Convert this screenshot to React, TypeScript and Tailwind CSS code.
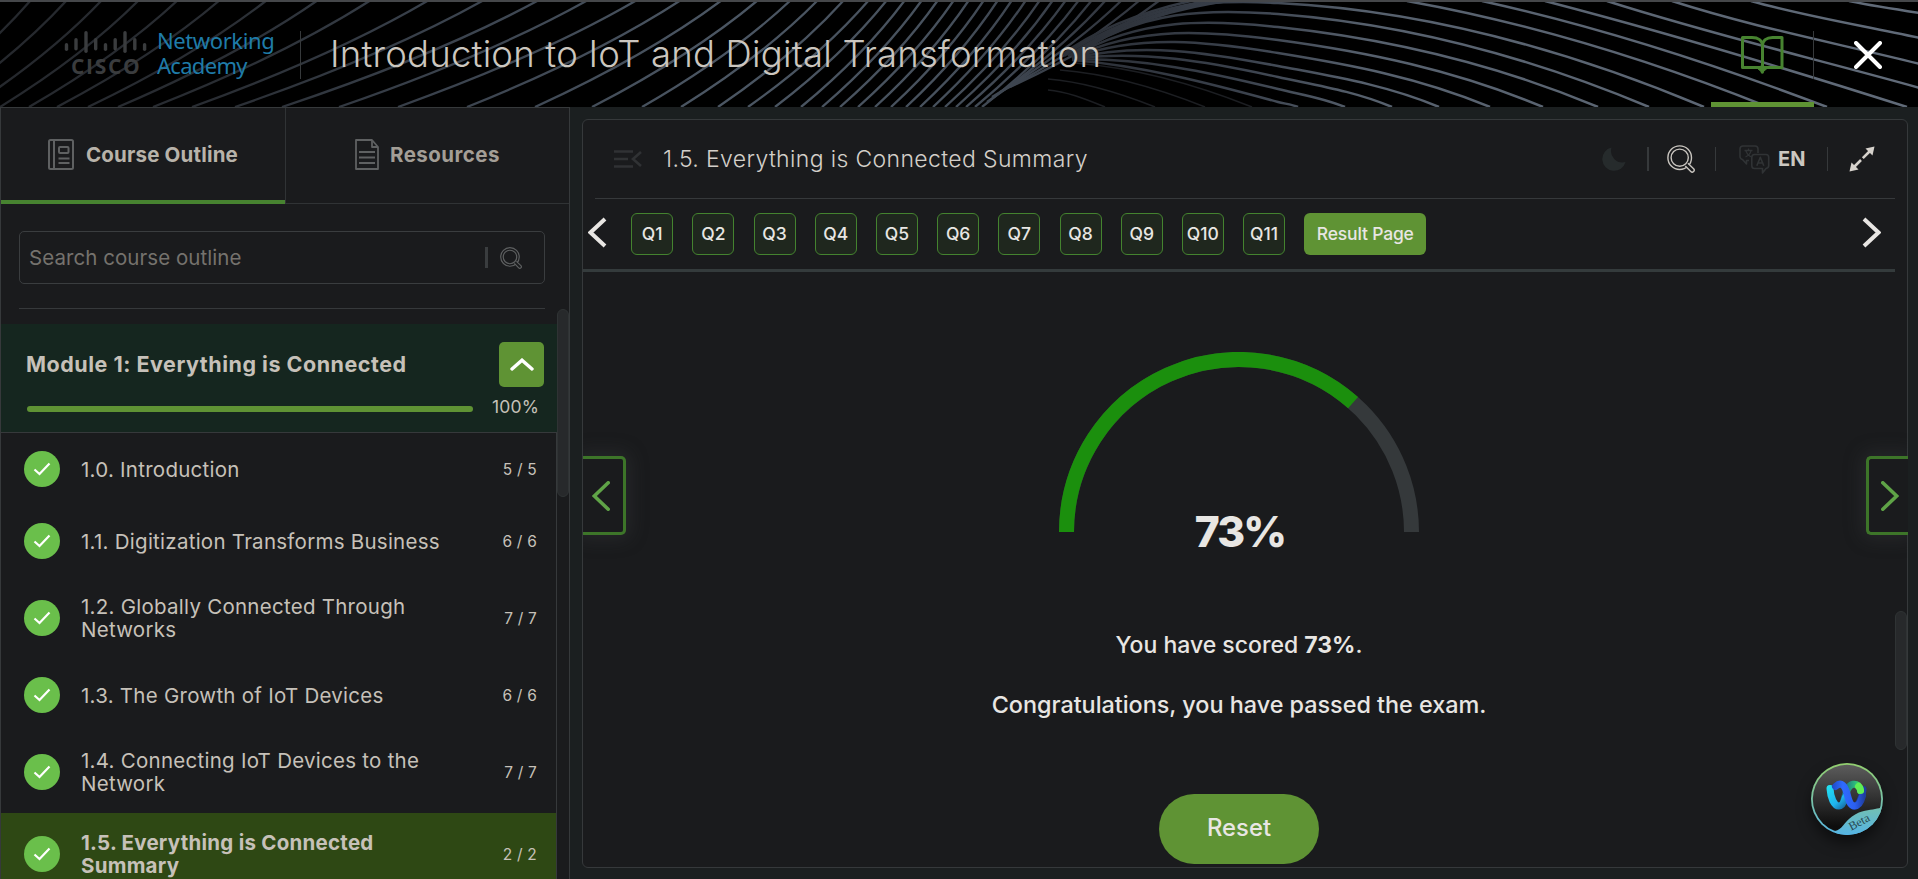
import React from "react";

type Pt = [number, number];

/* ---------- header background ---------- */
const topXs = [
  -110, -75, -40, -4, 31, 67, 102, 139, 178, 220, 267, 318, 371, 429, 484, 539, 588, 637, 681, 722, 758, 791, 818, 844,
  869, 887, 905, 922, 938, 954, 969, 984, 998, 1012, 1026, 1040, 1053, 1066, 1079, 1092, 1106, 1122, 1140, 1160,
];
const bottomXs = [
  -90, -60, -30, 0, 29, 57, 88, 118, 153, 192, 235, 282, 339, 398, 467, 535, 592, 642, 681, 718, 748, 775, 801, 822,
  840, 858, 875, 891, 906, 920, 933, 945, 956, 966, 975, 982, 987, 992, 1000, 1010,
];

function hermite(a: Pt, sa: number, b: Pt, sb: number) {
  const d = (b[0] - a[0]) / 3;
  return `C${a[0] + d} ${a[1] + sa * d} ${b[0] - d} ${b[1] - sb * d} ${b[0]} ${b[1]}`;
}

const leftLines = bottomXs.map((xb, i) => {
  const xt = topXs[i + 4] ?? 1180;
  const dx = xt - xb;
  const yb = i > 35 ? 107 - (i - 35) * 5 : 107;
  return `M${xb} ${yb} Q${xb + dx * 0.6} ${yb * 0.52} ${xt} 0`;
});

const rightEnds: [number, number][] = [
  [3, 1704], [14, 1649], [27, 1598], [40, 1543], [53, 1490], [66, 1439], [77, 1392], [89, 1345], [102, 1298],
];
const rightLines = rightEnds.map(([y, xe], i) => {
  const slope = 0.05 + i * 0.028;
  return `M1072 ${56 + i * 0.5} ${hermite([1072, 56 + i * 0.5], -0.8 + i * 0.11, [1278, y], slope)} ${hermite([1278, y], slope, [xe, 107], 0.42)}`;
});
const outerLines = [
  `M1407 1 ${hermite([1407, 1], 0.18, [1768, 107], 0.4)}`,
  `M1482 1 ${hermite([1482, 1], 0.22, [1827, 107], 0.38)}`,
  `M1545 1 ${hermite([1545, 1], 0.26, [1907, 107], 0.32)}`,
  `M1607 1 ${hermite([1607, 1], 0.32, [1920, 88], 0.28)}`,
  `M1672 1 ${hermite([1672, 1], 0.32, [1920, 64], 0.25)}`,
  `M1751 1 ${hermite([1751, 1], 0.28, [1920, 38], 0.22)}`,
  `M1849 1 ${hermite([1849, 1], 0.2, [1920, 13], 0.15)}`,
];
const fanLines = [0, 1, 2, 3].map(
  (i) => `M${1060 + i * 4} 56 C${1090 + i * 8} ${34 - i * 2} ${1130 + i * 14} ${14 - i * 3} ${1195 + i * 22} ${0 - i}`,
);
const dimLines = (
  [
    [1048, 90, 1105, 107],
    [1048, 79, 1155, 107],
    [1060, 70, 1205, 107],
    [1075, 63, 1252, 107],
  ] as number[][]
).map(([x1, y1, x2, y2]) => `M${x1} ${y1} ${hermite([x1, y1], 0.08, [x2, y2], 0.4)}`);

function HeaderLines() {
  return (
    <svg className="absolute inset-0" width="1918" height="107" viewBox="0 0 1918 107" fill="none" aria-hidden>
      <defs>
        <linearGradient id="fadeLeft" gradientUnits="userSpaceOnUse" x1="0" y1="0" x2="1100" y2="0">
          <stop offset="0" stopColor="#25282d" />
          <stop offset="0.2" stopColor="#292d33" />
          <stop offset="0.4" stopColor="#3a424d" />
          <stop offset="0.65" stopColor="#4b5663" />
          <stop offset="0.85" stopColor="#47515d" />
          <stop offset="1" stopColor="#333841" />
        </linearGradient>
        <linearGradient id="fadeRight" gradientUnits="userSpaceOnUse" x1="1070" y1="0" x2="1918" y2="0">
          <stop offset="0" stopColor="#2a2e35" />
          <stop offset="0.2" stopColor="#3a414c" />
          <stop offset="0.35" stopColor="#56606d" />
          <stop offset="1" stopColor="#616b79" />
        </linearGradient>
      </defs>
      <g stroke="url(#fadeLeft)" strokeWidth="2.3">
        {leftLines.map((d, i) => (
          <path key={i} d={d} />
        ))}
      </g>
      <g stroke="url(#fadeRight)" strokeWidth="2.5">
        {[...rightLines, ...outerLines, ...fanLines].map((d, i) => (
          <path key={i} d={d} />
        ))}
      </g>
      <g stroke="#1c1e22" strokeWidth="1.6">
        {dimLines.map((d, i) => (
          <path key={i} d={d} />
        ))}
      </g>
    </svg>
  );
}

function CiscoLogo() {
  const bars: [number, number, number][] = [
    [66.5, 12, 8], [76, 7, 12.5], [86, 0, 22], [95.7, 7, 12.5], [105.5, 12, 8], [115.2, 7, 12.5], [125, 0, 22],
    [134.8, 7, 12.5], [144.6, 12, 8],
  ];
  return (
    <div className="flex w-[84px] flex-col pt-[31px]">
      <svg width="84" height="22" viewBox="64 0 84 22" className="block" aria-hidden>
        {bars.map(([x, y, h]) => (
          <rect key={x} x={x - 1.7} y={y} width="3.4" height={h} rx="1.7" fill="#3a3c3e" />
        ))}
      </svg>
      <span className="mt-[3px] pl-[7px] font-['Open_Sans',sans-serif] text-[21px] leading-[21px] font-bold tracking-[1.7px] text-[#3a3c3e]">
        CISCO
      </span>
    </div>
  );
}

/* ---------- icons ---------- */
function BookIcon() {
  return (
    <svg width="44" height="40" viewBox="0 0 44 40" fill="none" stroke="#478330" strokeWidth="3" strokeLinejoin="round" className="mr-[2px]" aria-hidden>
      <path d="M2.500 2.500H12c6 0 10.500 3 10.500 8.500V32.500H2.500Z" />
      <path d="M42 2.500H32.500c-6 0-10 3-10 8.500V32.500H42Z" />
      <path d="M22.300 31v6" strokeWidth="3.400" strokeLinecap="round" />
      <path d="M17.500 33.500h9.500l-4.700 4z" fill="#478330" strokeWidth="1" />
    </svg>
  );
}

function MagnifierIcon({ size, color, line }: { size: number; color: string; line: number }) {
  return (
    <svg width={size} height={size} viewBox="0 0 28 28" fill="none" stroke={color} strokeWidth={line} aria-hidden>
      <circle cx="12.700" cy="12.700" r="11.800" />
      <path fill="#1a1b1d" strokeLinejoin="round" d="M18.300 20.900 23.800 26.500a1.900 1.900 0 0 0 2.800-2.700L20.900 18.300" />
      <circle cx="12.700" cy="12.700" r="8.600" />
    </svg>
  );
}

function OutlineIcon() {
  return (
    <svg width="26" height="31" viewBox="0 0 26 31" fill="none" stroke="#5f6162" strokeWidth="2" aria-hidden>
      <rect x="1" y="1" width="24" height="29" rx="1.500" />
      <path d="M6 1v29M10.500 19.500h11M10.500 24h11" />
      <rect x="11" y="8" width="9.500" height="6" rx="1" />
    </svg>
  );
}

function DocumentIcon() {
  return (
    <svg width="24" height="31" viewBox="0 0 24 31" fill="none" stroke="#5f6162" strokeWidth="1.800" strokeLinejoin="round" aria-hidden>
      <path d="M1 1h16l6 7v22H1Z" />
      <path d="M17 1v7h6M4 13h16M4 18.500h16M4 24h16" />
    </svg>
  );
}

function TranslateIcon() {
  return (
    <svg width="31" height="29" viewBox="0 0 31 29" fill="none" stroke="#303335" strokeWidth="1.600" strokeLinejoin="round" aria-hidden>
      <path d="M10 15.500H7.500v3.500l-4-4.500C1.800 14 1 13.200 1 11.500V4c0-1.800 1-3 3-3h12c2 0 3 1.200 3 3v4" />
      <path d="M5.500 5.500h8M9.500 3.500v2M6.500 12c3-1.500 5-3.500 5.500-6.500M7 6c1 3 3 5 5.500 6" strokeWidth="1.300" />
      <path d="M15.500 9.500H27c1.800 0 2.700 1 2.700 2.700v8.300c0 1.800-1 2.700-2.700 3l-3.500 4.500v-4.500h-8c-1.800 0-2.700-1-2.700-2.700v-8.600c0-1.700 1-2.700 2.700-2.700Z" />
      <path d="M17.800 20.800l3.500-8.500 3.500 8.500M19 18h4.600" />
    </svg>
  );
}

function ExpandIcon() {
  return (
    <svg width="26" height="26" viewBox="0 0 26 26" fill="#d6d2cc" aria-hidden>
      <path d="M25.500.500 23.500 9.500l-7-7Z" />
      <path d="M.500 25.500 2.500 16.500l7 7Z" />
      <path d="M20.500 5.500 13.800 12.200M12 14 5.500 20.500" stroke="#d6d2cc" strokeWidth="2.600" />
    </svg>
  );
}

function Chevron({ dir, w, h, color, line, cap = "round" }: { dir: "left" | "right"; w: number; h: number; color: string; line: number; cap?: "round" | "butt" }) {
  const p = line / 2;
  const d = dir === "left" ? `M${w - p} ${p}L${p + 0.5} ${h / 2}L${w - p} ${h - p}` : `M${p} ${p}L${w - p - 0.5} ${h / 2}L${p} ${h - p}`;
  return (
    <svg width={w} height={h} viewBox={`0 0 ${w} ${h}`} fill="none" stroke={color} strokeWidth={line} strokeLinecap={cap} aria-hidden>
      <path d={d} />
    </svg>
  );
}

function AssistantBadge() {
  return (
    <svg width="72" height="72" viewBox="0 0 72 72" fill="none" aria-hidden>
      <defs>
        <linearGradient id="ring" x1="0" y1="0" x2="0" y2="72" gradientUnits="userSpaceOnUse">
          <stop offset="0" stopColor="#93cf6e" />
          <stop offset="0.6" stopColor="#74c0b0" />
          <stop offset="1" stopColor="#55b4e4" />
        </linearGradient>
        <linearGradient id="disc" x1="0" y1="0" x2="0" y2="1">
          <stop offset="0" stopColor="#5c5c5c" />
          <stop offset="0.9" stopColor="#0d0d0d" />
        </linearGradient>
        <linearGradient id="cyanArm" x1="16" y1="24" x2="36" y2="46" gradientUnits="userSpaceOnUse">
          <stop offset="0" stopColor="#22e0f0" />
          <stop offset="0.6" stopColor="#1fb4ee" />
          <stop offset="1" stopColor="#14568f" />
        </linearGradient>
        <linearGradient id="greenArm" x1="34" y1="0" x2="52" y2="0" gradientUnits="userSpaceOnUse">
          <stop offset="0" stopColor="#1c6f86" />
          <stop offset="0.6" stopColor="#2fbf7a" />
          <stop offset="1" stopColor="#66f04f" />
        </linearGradient>
        <linearGradient id="blueArm" x1="20" y1="0" x2="54" y2="0" gradientUnits="userSpaceOnUse">
          <stop offset="0" stopColor="#1d46c0" />
          <stop offset="0.35" stopColor="#2f6bff" />
          <stop offset="0.7" stopColor="#2b5ff0" />
          <stop offset="1" stopColor="#1e3c9c" />
        </linearGradient>
        <clipPath id="discClip">
          <circle cx="36" cy="36" r="36" />
        </clipPath>
      </defs>
      <circle cx="36" cy="36" r="36" fill="url(#ring)" />
      <circle cx="36" cy="36" r="34.200" fill="url(#disc)" />
      <g clipPath="url(#discClip)">
        <path d="M24 68c7-1 9-9 17-14.500 10-7 17-6 23-7.500 3-.500 5-1 8-2v30H24Z" fill="url(#ring)" />
      </g>
      <g strokeWidth="7" strokeLinecap="round">
        <path d="M52 26.500C51 37 47 43 43 43" stroke="#1f3f9f" />
        <path d="M33 37c2-8 4-15 9-15.800 4-.500 7 2 7.500 6.300" stroke="url(#greenArm)" />
        <path d="M19 25.500c.500 9 4 17.500 9 17.500 3 0 5-4 6.500-9" stroke="url(#cyanArm)" />
        <path d="M24.500 23.500c6-5.500 9.500-.500 11.500 7 1.500 6 3 12.500 7.500 12.500 4 0 6.500-4 8-10" stroke="url(#blueArm)" />
        <path d="M47.500 23.500q2 2 2 4" stroke="#5fee55" />
      </g>
    </svg>
  );
}

/* ---------- sidebar ---------- */
const lessons = [
  { title: ["1.0. Introduction"], done: "5 / 5" },
  { title: ["1.1. Digitization Transforms Business"], done: "6 / 6" },
  { title: ["1.2. Globally Connected Through", "Networks"], done: "7 / 7" },
  { title: ["1.3. The Growth of IoT Devices"], done: "6 / 6" },
  { title: ["1.4. Connecting IoT Devices to the", "Network"], done: "7 / 7" },
  { title: ["1.5. Everything is Connected", "Summary"], done: "2 / 2", active: true },
];

function Sidebar() {
  return (
    <aside className="relative flex h-[772px] w-[570px] shrink-0 flex-col border-x border-t border-[#36393b] bg-[#1a1b1d]">
      <div className="flex h-[96px] shrink-0">
        <button className="flex w-[284px] items-center border-b-4 border-[#478330] pl-[47px]">
          <OutlineIcon />
          <span className="ml-[12px] pt-[2px] text-[20.500px] font-bold tracking-[0.170px] text-[#b8b3aa]">Course Outline</span>
        </button>
        <button className="flex flex-1 items-center border-b border-l border-[#303335] pb-[3px] pl-[69px]">
          <DocumentIcon />
          <span className="ml-[11px] pt-[2px] text-[20.500px] font-bold tracking-[0.450px] text-[#a39e96]">Resources</span>
        </button>
      </div>

      <div className="mx-[18px] mt-[27px] flex h-[53px] w-[526px] shrink-0 items-center rounded-[5px] border border-[#3a3d3f] pl-[9px]">
        <span className="w-[456px] pt-[2px] text-[20.500px] tracking-[0.060px] text-[#75726d]">Search course outline</span>
        <span className="h-[21px] w-[3px] bg-[#3a3d3f]" />
        <span className="ml-[12px]">
          <MagnifierIcon size={22} color="#5e6061" line={1.5} />
        </span>
      </div>
      <div className="mx-[18px] mt-[24px] h-px w-[526px] shrink-0 bg-[#36393b]" />

      <div className="mt-[15px] flex h-[109px] w-[556px] shrink-0 flex-col border-b border-[#36393b] bg-[#15261f] pt-[18px] pl-[25px]">
        <div className="flex h-[45px] items-center justify-between pr-[13px]">
          <span className="text-[21.500px] font-bold tracking-[0.510px] text-[#c6c1b9]">Module 1: Everything is Connected</span>
          <button className="flex h-[45px] w-[45px] items-center justify-center rounded-[5px] bg-[#5f9334]">
            <svg width="24" height="13" viewBox="0 0 24 13" fill="none" stroke="#fff" strokeWidth="3.400" strokeLinecap="round" aria-hidden>
              <path d="M2 11 12 2.200 22 11" />
            </svg>
          </button>
        </div>
        <div className="mt-[7px] flex h-[26px] items-center">
          <div className="mt-[4px] ml-px h-[6px] w-[446px] rounded-[3px] bg-[#5f9334]" />
          <span className="ml-[19px] pt-px text-[17.500px] tracking-[0.200px] text-[#c6c1b9]">100%</span>
        </div>
      </div>

      <ul className="flex w-[556px] flex-1 flex-col overflow-hidden border-r border-[#36393b]">
        {lessons.map((l) => (
          <li
            key={l.done + l.title[0]}
            className={
              "flex shrink-0 items-center pl-[23px] pr-[19px] " +
              (l.title.length > 1 ? "h-[82px] " : "h-[72px] ") +
              (l.active ? "bg-[#2e4814]" : "")
            }
          >
            <span className="flex h-[36px] w-[36px] shrink-0 items-center justify-center rounded-full bg-[#6abf4b]">
              <svg width="18" height="14" viewBox="0 0 18 14" fill="none" stroke="#fff" strokeWidth="2.200" aria-hidden>
                <path d="M1.500 7.500 6.500 12 16.500 1.500" />
              </svg>
            </span>
            <span
              className={
                "ml-[21px] flex flex-1 flex-col text-[20.500px] leading-[23px] whitespace-nowrap text-[#c6c1b9] " +
                (l.active ? "font-bold tracking-[0.250px]" : "font-[430] tracking-[0.260px]")
              }
            >
              {l.title.map((t) => (
                <span key={t}>{t}</span>
              ))}
            </span>
            <span className="pt-px text-[15.500px] font-[430] tracking-[0.200px] text-[#c6c1b9]">{l.done}</span>
          </li>
        ))}
      </ul>

      <div className="absolute top-[201px] right-0 h-[188px] w-[12px] rounded-[6px] border border-[#2f3334] bg-[#27292b]" />
    </aside>
  );
}

/* ---------- main panel ---------- */
const questions = ["Q1", "Q2", "Q3", "Q4", "Q5", "Q6", "Q7", "Q8", "Q9", "Q10", "Q11"];
const SCORE = 73;

function Gauge() {
  const a = Math.PI * (1 - SCORE / 100);
  const x = 180 + 172.5 * Math.cos(a);
  const y = 180 - 172.5 * Math.sin(a);
  return (
    <svg width="360" height="180" viewBox="0 0 360 180" fill="none" strokeWidth="15" className="block" aria-hidden>
      <path d="M7.500 180A172.500 172.500 0 0 1 352.500 180" stroke="#35393b" />
      <path d={`M7.500 180A172.500 172.500 0 0 1 ${x} ${y}`} stroke="#1b8f0d" />
    </svg>
  );
}

function MainPanel() {
  return (
    <main className="relative mt-[12px] ml-[12px] flex h-[749px] w-[1326px] shrink-0 flex-col rounded-[6px] border border-[#36393b] bg-[#1a1b1d]">
      <div className="mx-[12px] flex h-[79px] shrink-0 items-center border-b border-[#36393b]">
        <svg width="28" height="20" viewBox="0 0 28 20" fill="none" stroke="#303234" strokeWidth="2.600" className="ml-[19px]" aria-hidden>
          <path d="M0 2.500h19M0 10h14M0 17.500h19" />
          <path d="M27 3 19 10l8 7" />
        </svg>
        <h2 className="ml-[21px] text-[23px] font-[340] tracking-[0.360px] text-[#d3cfc9]">1.5. Everything is Connected Summary</h2>
        <div className="ml-auto flex items-center pr-[20px]">
          <svg width="24" height="24" viewBox="0 0 24 24" fill="#262b2c" aria-hidden>
            <path d="M9.500.500A11.800 11.800 0 1 0 23.500 15 11.500 11.500 0 0 1 9.500.500Z" />
          </svg>
          <span className="ml-[21px] h-[24px] w-[2px] bg-[#36393b]" />
          <span className="ml-[18px]">
            <MagnifierIcon size={28} color="#c9c5bf" line={1.4} />
          </span>
          <span className="ml-[20px] h-[24px] w-px bg-[#36393b]" />
          <span className="ml-[23px]">
            <TranslateIcon />
          </span>
          <span className="ml-[8px] w-[28px] text-[20px] font-bold text-[#cbc7c0]">EN</span>
          <span className="ml-[21px] h-[24px] w-px bg-[#36393b]" />
          <span className="ml-[21px]">
            <ExpandIcon />
          </span>
        </div>
      </div>

      <div className="mr-[12px] flex h-[73px] shrink-0 items-center border-b-[3px] border-[#343b3c] pl-[5px] text-[#e8e6e3]">
        <span className="mr-[24.200px] pb-[3px]">
          <Chevron dir="left" w={19} h={31} color="#e8e6e3" line={4} cap="butt" />
        </span>
        <div className="flex gap-[19.200px]">
          {questions.map((q) => (
            <button
              key={q}
              className="flex h-[42px] w-[42px] items-center justify-center rounded-[6px] border border-[#44832f] bg-[#1f271e] text-[17.500px] font-[480] whitespace-nowrap"
            >
              {q}
            </button>
          ))}
          <button className="flex h-[42px] w-[122px] items-center justify-center rounded-[6px] bg-[#5f9334] text-[17.500px] font-[450] tracking-[-0.180px] whitespace-nowrap">
            Result Page
          </button>
        </div>
        <span className="mr-[14px] ml-auto pb-[3px]">
          <Chevron dir="right" w={19} h={31} color="#e8e6e3" line={4} cap="butt" />
        </span>
      </div>

      <div className="flex flex-1 flex-col items-center pr-[12px] text-[#e8e6e3]">
        <div className="mt-[80px] h-[180px]">
          <Gauge />
        </div>
        <div className="-mt-[26px] h-[52px] pl-[2px] text-[42.500px] leading-[52px] font-extrabold tracking-[-1.900px]">{SCORE}%</div>
        <p className="mt-[71px] text-[23px] leading-[32px] font-medium">
          You have scored <b className="font-bold">{SCORE}%</b>.
        </p>
        <p className="mt-[28px] text-[23.400px] leading-[32px] font-medium tracking-[-0.020px]">
          Congratulations, you have passed the exam.
        </p>
        <button className="mt-[73px] h-[70px] w-[160px] shrink-0 rounded-[35px] bg-[#5f9334] pb-[2px] text-[23.800px] font-[470]">Reset</button>
      </div>

      <button className="absolute top-[336px] left-0 flex h-[79px] w-[43px] items-center rounded-r-[5px] border-y-[3px] border-r-[3px] border-[#3d7529] bg-[#1a1b1d] pl-[9px] shadow-[0_0_18px_4px_rgba(60,64,66,0.35)] [clip-path:inset(-30px_-30px_-30px_0)]">
        <Chevron dir="left" w={18} h={30} color="#5fa347" line={3.6} />
      </button>
      <button className="absolute top-[336px] right-[-1px] flex h-[79px] w-[42px] items-center rounded-l-[5px] border-y-[3px] border-l-[3px] border-[#3d7529] bg-[#1a1b1d] pl-[12px] shadow-[0_0_18px_4px_rgba(60,64,66,0.35)] [clip-path:inset(-30px_0_-30px_-30px)]">
        <Chevron dir="right" w={18} h={30} color="#5fa347" line={3.6} />
      </button>

      <div className="absolute top-[491px] right-0 h-[139px] w-[12px] rounded-[6px] border border-[#2f3334] bg-[#27292b]" />

      <div className="absolute top-[643px] right-[24px] h-[72px] w-[72px] rounded-full shadow-[0_8px_14px_rgba(0,0,0,0.5)]">
        <AssistantBadge />
        <span className="absolute top-[50px] left-[35px] block w-[26px] -rotate-[28deg] text-center font-['Liberation_Serif',serif] text-[12px] leading-[18px] text-[#27474f]">
          Beta
        </span>
      </div>
    </main>
  );
}

export default function App() {
  return (
    <div className="flex h-[879px] w-[1918px] flex-col overflow-hidden bg-[#1b1f20] font-['Inter',sans-serif]">
      <header className="relative h-[107px] shrink-0 overflow-hidden bg-black">
        <HeaderLines />
        <div className="relative flex h-full border-t-2 border-[#45474a] pl-[64px]">
          <div className="-mt-[2px] flex">
            <CiscoLogo />
            <div className="ml-[9px] w-[143px] pt-[28px] font-['Noto_Sans','Open_Sans',sans-serif] text-[22px] leading-[25px] text-[#1f7ba8]">
              <div className="tracking-[-0.400px]">Networking</div>
              <div className="tracking-[-0.700px]">Academy</div>
            </div>
            <span className="mt-[31px] h-[48px] w-px bg-[#36393b]" />
            <h1 className="ml-[29px] pt-[31px] text-[36.500px] leading-[46px] font-[330] tracking-[0.200px] whitespace-nowrap text-[#cbc6bf]">
              Introduction to IoT and Digital Transformation
            </h1>
          </div>
          <div className="-mt-[2px] ml-auto flex">
            <div className="flex w-[103px] flex-col items-center justify-between border-b-[5px] border-[#5f9334] pt-[35px]">
              <BookIcon />
            </div>
            <span className="mt-[31px] -ml-px h-[48px] w-px bg-[#36393b]" />
            <svg width="28" height="28" viewBox="0 0 28 28" stroke="#fff" strokeWidth="4" strokeLinecap="round" className="mt-[41px] mr-[36px] ml-[40px]" aria-hidden>
              <path d="M2 2 26 26M26 2 2 26" />
            </svg>
          </div>
        </div>
      </header>
      <div className="flex flex-1">
        <Sidebar />
        <MainPanel />
      </div>
    </div>
  );
}
